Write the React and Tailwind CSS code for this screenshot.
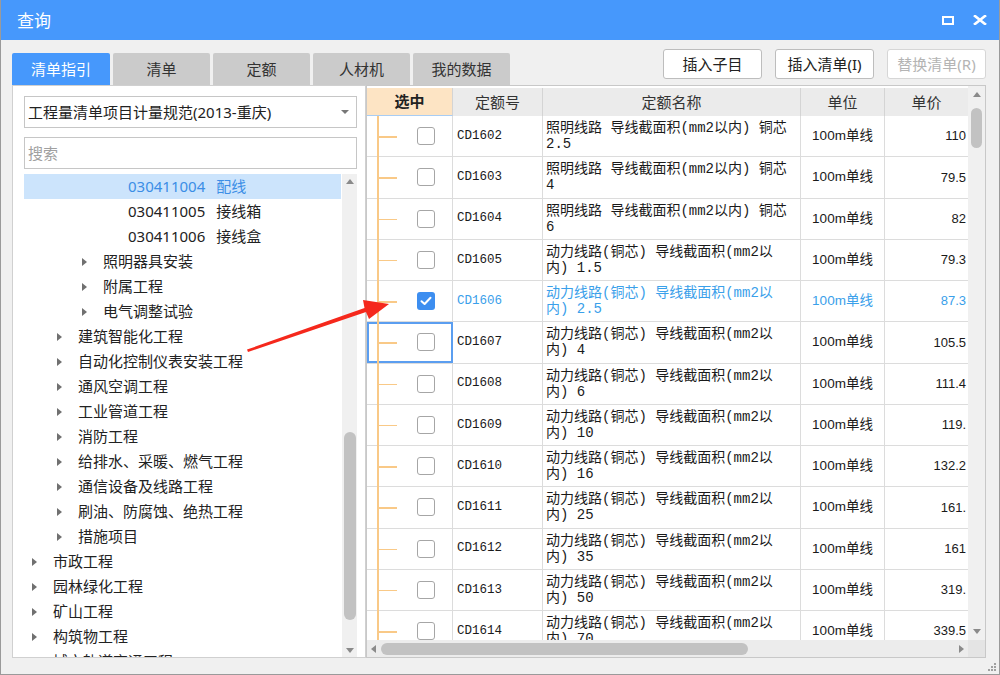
import React from 'react';

const tree = [
  { level: 3, code: '030411004', name: '配线', selected: true },
  { level: 3, code: '030411005', name: '接线箱' },
  { level: 3, code: '030411006', name: '接线盒' },
  { level: 2, name: '照明器具安装' },
  { level: 2, name: '附属工程' },
  { level: 2, name: '电气调整试验' },
  { level: 1, name: '建筑智能化工程' },
  { level: 1, name: '自动化控制仪表安装工程' },
  { level: 1, name: '通风空调工程' },
  { level: 1, name: '工业管道工程' },
  { level: 1, name: '消防工程' },
  { level: 1, name: '给排水、采暖、燃气工程' },
  { level: 1, name: '通信设备及线路工程' },
  { level: 1, name: '刷油、防腐蚀、绝热工程' },
  { level: 1, name: '措施项目' },
  { level: 0, name: '市政工程' },
  { level: 0, name: '园林绿化工程' },
  { level: 0, name: '矿山工程' },
  { level: 0, name: '构筑物工程' },
  { level: 0, name: '城市轨道交通工程' },
];

const indent = ['pl-[8px]', 'pl-[33px]', 'pl-[58px]', 'pl-[83px]'];

const lamp = '照明线路 导线截面积(mm2以内) 铜芯';
const power = '动力线路(铜芯) 导线截面积(mm2以';

const rows = [
  { code: 'CD1602', l1: lamp, l2: '2.5', price: '110' },
  { code: 'CD1603', l1: lamp, l2: '4', price: '79.5' },
  { code: 'CD1604', l1: lamp, l2: '6', price: '82' },
  { code: 'CD1605', l1: power, l2: '内) 1.5', price: '79.3' },
  { code: 'CD1606', l1: power, l2: '内) 2.5', price: '87.3', checked: true },
  { code: 'CD1607', l1: power, l2: '内) 4', price: '105.5', focus: true },
  { code: 'CD1608', l1: power, l2: '内) 6', price: '111.4' },
  { code: 'CD1609', l1: power, l2: '内) 10', price: '119.' },
  { code: 'CD1610', l1: power, l2: '内) 16', price: '132.2' },
  { code: 'CD1611', l1: power, l2: '内) 25', price: '161.' },
  { code: 'CD1612', l1: power, l2: '内) 35', price: '161' },
  { code: 'CD1613', l1: power, l2: '内) 50', price: '319.' },
  { code: 'CD1614', l1: power, l2: '内) 70', price: '339.5' },
];

const tabs = ['清单指引', '清单', '定额', '人材机', '我的数据'];

const ArrowUp = () => (
  <div className="w-0 h-0 border-x-[4px] border-x-transparent border-b-[5px] border-b-[#8a8a8a]" />
);
const ArrowDown = () => (
  <div className="w-0 h-0 border-x-[4px] border-x-transparent border-t-[5px] border-t-[#8a8a8a]" />
);
const ArrowLeft = () => (
  <div className="w-0 h-0 border-y-[4px] border-y-transparent border-r-[5px] border-r-[#8a8a8a]" />
);
const ArrowRight = () => (
  <div className="w-0 h-0 border-y-[4px] border-y-transparent border-l-[5px] border-l-[#8a8a8a]" />
);

const TreeRow = ({ item }) => (
  <div
    className={`h-[25px] flex items-center text-[15px] leading-[25px] whitespace-nowrap ${indent[item.level]} ${
      item.selected ? 'bg-[#cce4fc] text-[#3b8ee6] mr-[1px]' : 'text-[#222]'
    }`}
  >
    <div className="w-[21px] flex items-center">
      {item.level < 3 && (
        <div className="w-0 h-0 border-y-[4px] border-y-transparent border-l-[5px] border-l-[#707070]" />
      )}
    </div>
    {item.code && <span className="mr-[11px]">{item.code}</span>}
    <span>{item.name}</span>
  </div>
);

const TableRow = ({ row }) => {
  const text = row.checked ? 'text-[#3aa0ea]' : 'text-[#1a1a1a]';
  return (
    <div className={`grid grid-cols-[86px_90px_258px_84px_83px] h-[41.25px] border-b border-[#dcdcdc] ${text}`}>
      <div
        className={`relative flex items-center justify-end pr-[17px] border-r border-[#dcdcdc] ${
          row.focus ? 'outline-2 outline-[#5b9ef0] -outline-offset-2' : ''
        }`}
      >
        <div className="absolute left-[10px] top-0 bottom-[-1px] w-[1.5px] bg-[#f9c987]" />
        <div className="absolute left-[10px] top-1/2 w-[20px] h-[1.5px] bg-[#f9c987]" />
        {row.checked ? (
          <div className="w-[18px] h-[18px] rounded-[3px] bg-[#3d8ef0] flex items-center justify-center">
            <svg width="12" height="10" viewBox="0 0 12 10">
              <path d="M1.5 5.2 L4.6 8 L10.5 1.8" fill="none" stroke="#fff" strokeWidth="2" strokeLinecap="round" strokeLinejoin="round" />
            </svg>
          </div>
        ) : (
          <div className="w-[18px] h-[18px] rounded-[3px] border border-[#a6a6a6] bg-white" />
        )}
      </div>
      <div className="flex items-center pl-[4px] border-r border-[#dcdcdc] font-['Liberation_Mono','Noto_Sans_CJK_SC',monospace] text-[12.5px]">
        {row.code}
      </div>
      <div className="flex flex-col justify-center pl-[3px] border-r border-[#dcdcdc] font-['Liberation_Mono','Noto_Sans_CJK_SC',monospace] text-[14px] leading-[16px] whitespace-nowrap">
        <div>{row.l1}</div>
        <div>{row.l2}</div>
      </div>
      <div className="flex items-center justify-center border-r border-[#dcdcdc] text-[13.5px] font-['Liberation_Sans','Noto_Sans_CJK_SC',sans-serif]">
        100m单线
      </div>
      <div className="flex items-center justify-end pr-[2px] text-[13px] font-['Liberation_Sans',sans-serif]">
        {row.price}
      </div>
    </div>
  );
};

export default function App() {
  return (
    <div className="relative w-[1000px] h-[675px] bg-[#f0f0f0] border-x border-b border-[#9a9a9a] flex flex-col overflow-hidden font-['Noto_Sans','Noto_Sans_CJK_SC',sans-serif]">
      {/* Title bar */}
      <div className="h-[40px] shrink-0 bg-[#4698fc] flex items-center justify-between pl-[16px] pr-[12px] text-white">
        <span className="text-[17px] leading-none">查询</span>
        <div className="flex items-center gap-[19px]">
          <div className="w-[12px] h-[9px] border-2 border-white" />
          <svg width="14" height="10" viewBox="0 0 14 10">
            <path d="M2 1 L12 9 M12 1 L2 9" stroke="#fff" strokeWidth="2.6" strokeLinecap="square" />
          </svg>
        </div>
      </div>

      <div className="flex-1 min-h-0 flex flex-col pl-[11px] pr-[13px] pb-[16px]">
        {/* Tabs + buttons */}
        <div className="h-[36px] mt-[9px] shrink-0 flex justify-between">
          <div className="flex items-end gap-[3px]">
            {tabs.map((t, i) => (
              <div
                key={t}
                className={`h-[32px] flex items-center justify-center text-[15px] rounded-t-[2px] ${
                  i === 0 ? 'w-[98px] bg-[#4698fc] text-white' : 'w-[97px] bg-[#cbcbcb] text-[#333]'
                }`}
              >
                {t}
              </div>
            ))}
          </div>
          <div className="flex items-start gap-[13px]">
            <button className="w-[99px] h-[30px] bg-white border border-[#bdbdbd] rounded-[3px] text-[15px] text-[#222]">插入子目</button>
            <button className="w-[99px] h-[30px] bg-white border border-[#bdbdbd] rounded-[3px] text-[15px] text-[#222]">插入清单(I)</button>
            <button className="w-[99px] h-[30px] bg-white border border-[#d6d6d6] rounded-[3px] text-[15px] text-[#b4b4b4]">替换清单(R)</button>
          </div>
        </div>

        {/* Main area */}
        <div className="flex-1 min-h-0 flex">
          {/* Left panel */}
          <div className="w-[354px] shrink-0 bg-white border border-[#d0d0d0] flex flex-col pl-[11px] pr-[8px] pt-[10px]">
            <div className="h-[32px] shrink-0 border border-[#c6c6c6] flex items-center justify-between pl-[3px] pr-[7px] text-[15px] text-[#222]">
              <span>工程量清单项目计量规范(2013-重庆)</span>
              <div className="w-0 h-0 border-x-[4px] border-x-transparent border-t-[4px] border-t-[#777]" />
            </div>
            <div className="h-[32px] shrink-0 mt-[9px] border border-[#c6c6c6] flex items-center pl-[3px] text-[15px] text-[#a0a0a0]">
              搜索
            </div>
            <div className="flex-1 min-h-0 mt-[5px] flex overflow-hidden">
              <div className="flex-1 min-w-0 overflow-hidden">
                {tree.map((t) => (
                  <TreeRow key={t.name} item={t} />
                ))}
              </div>
              <div className="w-[15px] shrink-0 bg-[#f0f0f0] flex flex-col">
                <div className="h-[14px] flex items-center justify-center"><ArrowUp /></div>
                <div className="flex-1 flex justify-center">
                  <div className="w-[12px] h-[188px] mt-[244px] rounded-full bg-[#c2c2c2]" />
                </div>
                <div className="h-[14px] flex items-center justify-center"><ArrowDown /></div>
              </div>
            </div>
          </div>

          {/* Right panel */}
          <div className="flex-1 min-w-0 bg-white border border-[#c8c8c8] flex flex-col">
            <div className="flex-1 min-h-0 flex">
              <div className="flex-1 min-w-0 overflow-hidden pt-[2px]">
                <div className="grid grid-cols-[86px_90px_258px_84px_83px] h-[28px] bg-[#ebebeb] text-[15px] text-[#333]">
                  <div className="flex items-center justify-center bg-[#fde4c4] font-bold text-[#222] border-r border-[#d4d4d4] border-b border-b-[#a8cdf4]">选中</div>
                  <div className="flex items-center justify-center border-r border-[#d4d4d4]">定额号</div>
                  <div className="flex items-center justify-center border-r border-[#d4d4d4]">定额名称</div>
                  <div className="flex items-center justify-center border-r border-[#d4d4d4]">单位</div>
                  <div className="flex items-center justify-center">单价</div>
                </div>
                {rows.map((r) => (
                  <TableRow key={r.code} row={r} />
                ))}
              </div>
              <div className="w-[17px] shrink-0 bg-[#f0f0f0] flex flex-col">
                <div className="h-[17px] flex items-center justify-center"><ArrowUp /></div>
                <div className="flex-1 flex justify-center">
                  <div className="w-[11px] h-[40px] mt-[5px] rounded-full bg-[#c2c2c2]" />
                </div>
                <div className="h-[17px] flex items-center justify-center"><ArrowDown /></div>
              </div>
            </div>
            <div className="h-[17px] shrink-0 flex bg-[#ececec]">
              <div className="w-[13px] flex items-center justify-center"><ArrowLeft /></div>
              <div className="flex-1 flex items-center pl-[1px]">
                <div className="w-[367px] h-[12px] rounded-full bg-[#c2c2c2]" />
              </div>
              <div className="w-[14px] flex items-center justify-center"><ArrowRight /></div>
              <div className="w-[17px] bg-[#e4e4e4]" />
            </div>
          </div>
        </div>
      </div>

      {/* Resize grip */}
      <svg className="absolute right-[2px] bottom-[2px]" width="10" height="10" viewBox="0 0 10 10">
        <rect x="7" y="1" width="2" height="2" fill="#a0a0a0" />
        <rect x="4" y="4" width="2" height="2" fill="#a0a0a0" />
        <rect x="7" y="4" width="2" height="2" fill="#a0a0a0" />
        <rect x="1" y="7" width="2" height="2" fill="#a0a0a0" />
        <rect x="4" y="7" width="2" height="2" fill="#a0a0a0" />
        <rect x="7" y="7" width="2" height="2" fill="#a0a0a0" />
      </svg>

      {/* Red annotation arrow */}
      <svg className="absolute left-0 top-0 pointer-events-none" width="1000" height="675" viewBox="-1 0 1000 675">
        <polygon
          points="246,352 364,312 367,319 387,304 361,300 362.5,308 245,349.6"
          fill="#f5281c"
        />
      </svg>
    </div>
  );
}
